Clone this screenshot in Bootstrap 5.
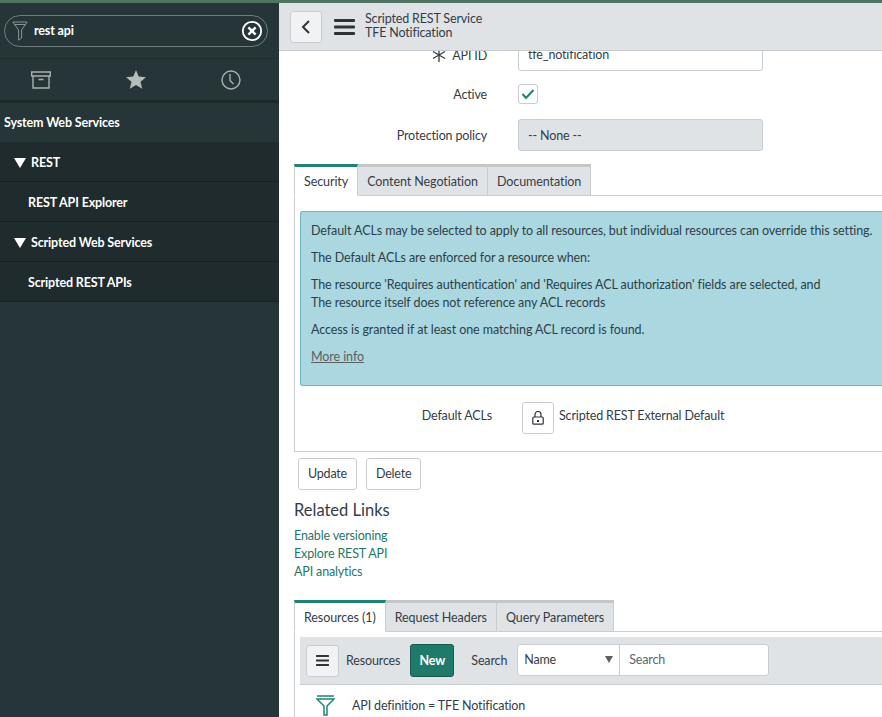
<!DOCTYPE html>
<html lang="en"><head><meta charset="utf-8"><title>TFE Notification</title>
<link href="https://cdn.jsdelivr.net/npm/bootstrap@5.3.0/dist/css/bootstrap.min.css" rel="stylesheet">
<style>
html,body{height:717px;overflow:hidden;}
body{font-family:Lato,"Noto Sans","Liberation Sans",sans-serif;font-size:12.500px;letter-spacing:-.15px;color:#343d47;background:#fff;}
.topline{height:3px;background:#4f7562;}
.shell{height:714px;}
.side{width:279px;background:#263638;color:#fff;font-weight:700;}
.filterbox{margin:12px 11px 0 4px;height:32px;border:1px solid #6f7c7e;border-radius:16px;padding:0 4px 0 7px;}
.filterbox span{flex:1;margin-left:6px;}
.sidetabs{margin-top:11px;height:41px;border-top:1px solid #1f2d2f;border-bottom:3px solid #1c2829;box-sizing:content-box;padding:0 38px 0 31px;}
.sidehead{height:39px;padding:2px 0 0 4px;}
.siderow{height:40px;background:#1f2b2c;border-bottom:1px solid #172122;padding-top:4px;}
.lvl1{padding-left:14px;gap:5px;}
.lvl2{padding-left:28px;}
.tri{width:0;height:0;border-left:6px solid transparent;border-right:6px solid transparent;border-top:10px solid #fff;margin-top:-2px;}
.mainpane{flex:1;min-width:0;overflow:hidden;}
.hdr{height:48px;background:#e0e3e6;border-bottom:1px solid #c8cbce;padding-left:11px;position:relative;z-index:2;}
.backbtn{width:32px;height:32px;background:#f1f2f3;border:1px solid #c9ccd0;border-radius:3px;}
.hdrtitle{line-height:14px;margin-left:10px;margin-top:-2px;}
.burger{margin-left:12px;}
.pagebody{width:603px;margin-top:-13px;padding-left:15px;}
.formline{display:flex;align-items:center;}
.flabel{width:193px;text-align:right;margin-right:31px;flex:none;padding-top:2px;}
.flabel.apilabel{padding-top:4px;}
.apilabel svg{margin-right:6px;vertical-align:-2px;}
.fctl{height:33px;width:245px;border:1px solid #c9ccd0;border-radius:3px;padding:2px 9px 0;display:flex;align-items:center;background:#fff;}
.fctl.ro{height:32px;background:#e0e3e6;}
.activeline{margin-top:13px;height:20px;}
.policyline{margin-top:15px;}
.chk{width:20px;height:20px;border:1px solid #c9ccd0;border-radius:3px;}
.tabbar{display:flex;margin-top:13px;height:32px;}
.tabcell{background:#e0e3e6;border:1px solid #c9ccd0;border-top:3px solid #c4c6c8;border-left:0;padding:3px 9px 0;display:flex;align-items:center;letter-spacing:-.08px;}
.tabcell.on{background:#fff;border-top-color:#1f8476;border-left:1px solid #c9ccd0;border-bottom-color:#fff;}
.tabcell:last-child{border-top-right-radius:3px;}
.tabrest{flex:1;border-bottom:1px solid #c9ccd0;}
.tabbody{border:1px solid #c9ccd0;border-top:0;border-right:0;height:256px;padding:15px 0 0 5px;}
.infobox{background:#abd7e0;border:1px solid #6cb6c6;border-right:0;border-radius:3px 0 0 3px;height:175px;padding:10px 0 0 10px;width:600px;line-height:18px;color:#2c3f48;letter-spacing:-.08px;}
.infobox p{margin:0 0 9px;white-space:nowrap;}
.infobox a{color:#5c5f5f;}
.aclrow{margin-top:16px;}
.acllabel{width:192px;text-align:right;margin-right:30px;margin-bottom:3px;}
.acltext{margin-bottom:3px;}
.lockbtn{width:32px;height:32px;border:1px solid #c9ccd0;border-radius:3px;margin-right:5px;}
.plainbtn{height:32px;border:1px solid #c9ccd0;border-radius:3px;padding:0 9px;background:#fff;color:#343d47;font-size:inherit;letter-spacing:-.2px;line-height:1;}
.actions{gap:9px;padding:6px 0 0 4px;}
.relhead{font-size:16.500px;letter-spacing:0;margin:10px 0 7px;line-height:20px;font-weight:400;}
.rellinks{line-height:18px;}
.rellinks a{display:block;color:#1f7768;text-decoration:none;}
.tabbar.second{margin-top:19px;height:32px;}
.tabbody2{border-left:1px solid #c9ccd0;padding:5px 0 0 5px;}
.lbar{height:48px;background:#e0e3e6;border-bottom:1px solid #c9ccd0;padding-left:6px;width:600px;}
.lbar span{padding-top:2px;}
.burgerbtn{width:33px;height:32px;background:#f1f2f3;border:1px solid #c9ccd0;border-radius:3px;}
.lbl-res{margin-left:7px;}
.lbl-search{margin-left:17px;}
.newbtn{height:33px;width:44px;margin-left:10px;padding:2px 0 0;background:#1f7a6a;border:1px solid #16594e;border-radius:3px;color:#fff;font-weight:700;font-size:inherit;letter-spacing:inherit;line-height:1;}
.searchgrp{width:252px;height:32px;background:#fff;border:1px solid #c9ccd0;border-radius:3px;margin-left:10px;margin-top:-2px;}
.searchgrp .nm{width:102px;border-right:1px solid #c9ccd0;padding:0 6px;height:100%;}
.searchgrp .ph{padding:2px 0 0 9px;color:#5c6670;}
.caretd{width:0;height:0;border-left:4px solid transparent;border-right:4px solid transparent;border-top:7px solid #5c6066;}
.crumb{padding:9px 0 0 16px;height:32px;}
.crumb span{margin-left:17px;padding-top:2px;}
</style></head>
<body>
<div class="topline"></div>
<div class="shell d-flex">
  <aside class="side flex-shrink-0">
    <div class="filterbox d-flex align-items-center">
      <svg width="16" height="20" viewBox="0 0 16 20" fill="none" stroke="#8a9495"><path d="M.8 1h14.400L9.600 9v8l-3 2.200V9z"/><path d="M3 3.500h10"/></svg>
      <span>rest api</span>
      <svg width="22" height="22" viewBox="0 0 22 22" fill="none" stroke="#fff"><circle cx="11" cy="11" r="9.200" stroke-width="1.800"/><path d="M7.400 7.400l7.200 7.200M14.600 7.400l-7.200 7.200" stroke-width="2.400"/></svg>
    </div>
    <div class="sidetabs d-flex align-items-center justify-content-between">
      <svg width="20" height="18" viewBox="0 0 20 18" fill="none" stroke="#aab0b1" stroke-width="1.400"><path d="M.7 1h18.600v4H.7zM2 5v12h16V5M7.500 8.500h5"/></svg>
      <svg width="20" height="19" viewBox="0 0 20 19" fill="#b6bbbc"><path d="M10 0l2.700 6.600 7.300.6-5.500 4.600 1.700 7-6.200-3.700-6.200 3.700 1.700-7L0 7.200l7.300-.6z"/></svg>
      <svg width="20" height="20" viewBox="0 0 20 20" fill="none" stroke="#aab0b1" stroke-width="1.400"><circle cx="10" cy="10" r="9"/><path d="M9 4v6.500l3.500 3.500"/></svg>
    </div>
    <div class="sidehead d-flex align-items-center">System Web Services</div>
    <div class="siderow lvl1 d-flex align-items-center"><i class="tri"></i>REST</div>
    <div class="siderow lvl2 d-flex align-items-center">REST API Explorer</div>
    <div class="siderow lvl1 d-flex align-items-center"><i class="tri"></i>Scripted Web Services</div>
    <div class="siderow lvl2 d-flex align-items-center">Scripted REST APIs</div>
  </aside>
  <main class="mainpane">
    <header class="hdr d-flex align-items-center">
      <div class="backbtn d-flex align-items-center justify-content-center"><svg width="10" height="16" viewBox="0 0 10 16" fill="none" stroke="#2e3338" stroke-width="2"><path d="M8 2L2 8l6 6"/></svg></div>
      <svg class="burger" width="21" height="16" viewBox="0 0 21 16" fill="#2e3338"><rect width="21" height="3" rx="1"/><rect y="6.500" width="21" height="3" rx="1"/><rect y="13" width="21" height="3" rx="1"/></svg>
      <div class="hdrtitle"><div>Scripted REST Service</div><div>TFE Notification</div></div>
    </header>
    <div class="pagebody">
      <div class="formline">
        <div class="flabel apilabel"><svg width="14" height="14" viewBox="0 0 14 14" fill="none" stroke="#343d47" stroke-width="1.300"><path d="M7 0v14M1 3.500l12 7M13 3.500l-12 7"/></svg>API ID</div>
        <div class="fctl">tfe_notification</div>
      </div>
      <div class="formline activeline"><div class="flabel">Active</div>
        <div class="chk d-flex align-items-center justify-content-center"><svg width="14" height="12" viewBox="0 0 14 12" fill="none" stroke="#1f7f70" stroke-width="2"><path d="M1.500 6l3.500 4L12.500 2"/></svg></div></div>
      <div class="formline policyline"><div class="flabel">Protection policy</div><div class="fctl ro">-- None --</div></div>

      <div class="tabbar">
        <div class="tabcell on">Security</div><div class="tabcell">Content Negotiation</div><div class="tabcell">Documentation</div><div class="tabrest"></div>
      </div>
      <div class="tabbody">
        <div class="infobox">
          <p>Default ACLs may be selected to apply to all resources, but individual resources can override this setting.</p>
          <p>The Default ACLs are enforced for a resource when:</p>
          <p>The resource 'Requires authentication' and 'Requires ACL authorization' fields are selected, and<br>The resource itself does not reference any ACL records</p>
          <p>Access is granted if at least one matching ACL record is found.</p>
          <p><a href="#">More info</a></p>
        </div>
        <div class="aclrow d-flex align-items-center">
          <div class="acllabel">Default ACLs</div>
          <div class="lockbtn d-flex align-items-center justify-content-center"><svg width="12" height="14" viewBox="0 0 12 14" fill="none" stroke="#2e3338" stroke-width="1.200"><rect x=".8" y="6" width="10.400" height="7.200" rx="1"/><path d="M3 6V3.500a3 3 0 0 1 6 0V6"/><path d="M6 9v2" stroke-width="2"/></svg></div>
          <div class="acltext">Scripted REST External Default</div>
        </div>
      </div>
      <div class="actions d-flex">
        <button class="plainbtn">Update</button><button class="plainbtn">Delete</button>
      </div>
      <h2 class="relhead">Related Links</h2>
      <div class="rellinks"><a href="#">Enable versioning</a><a href="#">Explore REST API</a><a href="#">API analytics</a></div>
      <div class="tabbar second">
        <div class="tabcell on">Resources (1)</div><div class="tabcell">Request Headers</div><div class="tabcell">Query Parameters</div><div class="tabrest"></div>
      </div>
      <div class="tabbody2">
        <div class="lbar d-flex align-items-center">
          <div class="burgerbtn d-flex align-items-center justify-content-center"><svg width="13" height="11" viewBox="0 0 13 11" fill="#2e3338"><rect width="13" height="2" rx=".5"/><rect y="4.500" width="13" height="2" rx=".5"/><rect y="9" width="13" height="2" rx=".5"/></svg></div>
          <span class="lbl-res">Resources</span>
          <button class="newbtn">New</button>
          <span class="lbl-search">Search</span>
          <div class="searchgrp d-flex align-items-center">
            <div class="nm d-flex align-items-center justify-content-between"><span>Name</span><i class="caretd"></i></div>
            <div class="ph">Search</div>
          </div>
        </div>
        <div class="crumb d-flex align-items-center">
          <svg width="19" height="22" viewBox="0 0 19 22" fill="none" stroke="#1f8476" stroke-width="1.500"><path d="M1 1h17M1 4h17L11 11v9H8v-9z"/></svg>
          <span>API definition = TFE Notification</span>
        </div>
      </div>
    </div>
  </main>
</div>
</body></html>
